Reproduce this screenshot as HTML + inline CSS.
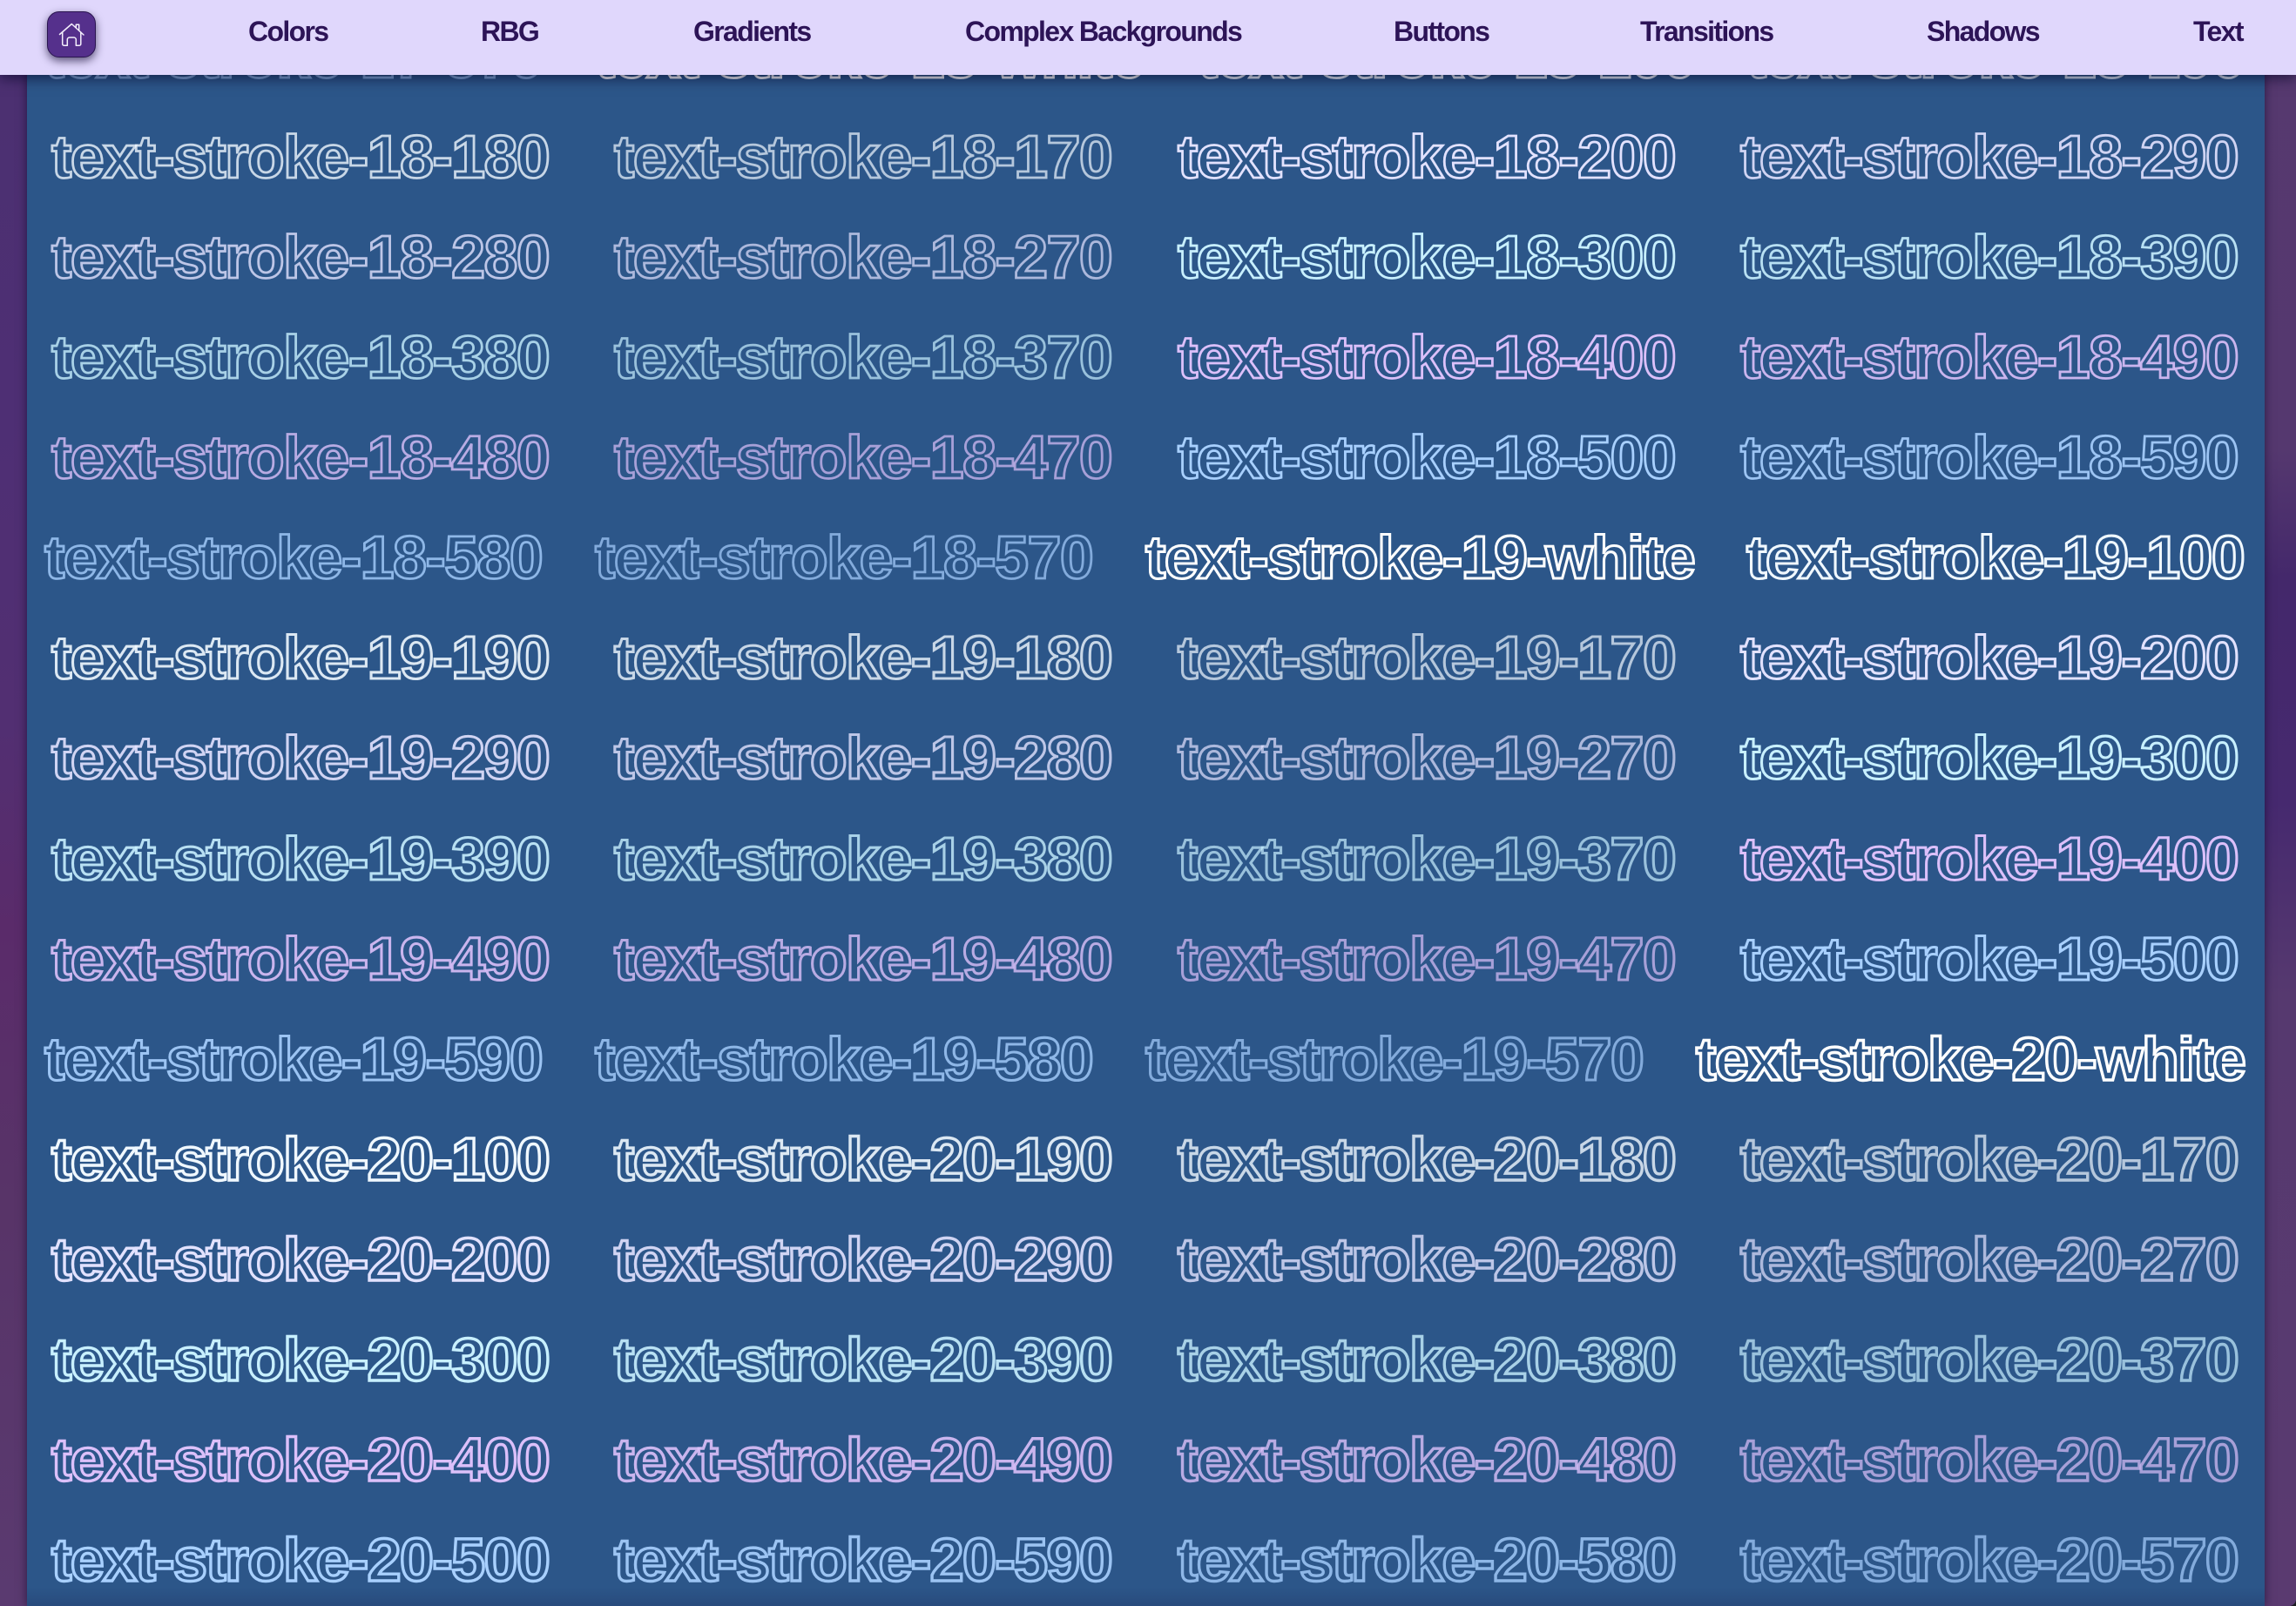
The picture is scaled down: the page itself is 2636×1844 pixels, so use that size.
<!DOCTYPE html>
<html lang="en"><head><meta charset="utf-8"><title>Text Stroke</title>
<style>
html,body{margin:0;padding:0;width:2636px;height:1844px;overflow:hidden;background:#1c1c22}
#win{position:absolute;left:0;top:0;width:2636px;height:1844px;overflow:hidden;border-radius:0 0 8px 0;
background:linear-gradient(180deg,#4b3070 0,#4e2f74 25%,#522f72 45%,#5a2b6a 58%,#583468 75%,#5a3a70 100%)}
#rs{position:absolute;left:2600px;top:0;width:36px;height:1844px;background:linear-gradient(180deg,#56396f 0,#55386f 28%,#44286b 36%,#46296f 50%,#56396f 62%,#5a3a70 100%)}
#panel{position:absolute;left:31px;top:0;width:2569px;height:1844px;background:#2c5689;box-shadow:0 0 10px rgba(10,5,35,.6)}
#bot{position:absolute;left:31px;top:1822px;width:2569px;height:22px;background:linear-gradient(180deg,rgba(25,35,80,0),rgba(25,35,80,.22))}
.r{position:absolute;left:0;width:2636px;height:80px}
.r span{position:absolute;top:0;white-space:nowrap;font:700 70px/80px "Liberation Sans",Arial,sans-serif;letter-spacing:-1.55px;color:transparent;-webkit-text-stroke-width:3px;-webkit-text-stroke-color:#fff}
.r .s18{-webkit-text-stroke-width:2.8px}.r .s19{-webkit-text-stroke-width:3.1px}.r .s20{-webkit-text-stroke-width:3.4px}
.r .w{-webkit-text-stroke-color:#fff}
.r .c100{-webkit-text-stroke-color:#f0f8ff}.r .c190{-webkit-text-stroke-color:rgba(240,248,255,.9)}.r .c180{-webkit-text-stroke-color:rgba(240,248,255,.8)}.r .c170{-webkit-text-stroke-color:rgba(240,248,255,.7)}
.r .c200{-webkit-text-stroke-color:#e2e2ff}.r .c290{-webkit-text-stroke-color:rgba(226,226,255,.9)}.r .c280{-webkit-text-stroke-color:rgba(226,226,255,.8)}.r .c270{-webkit-text-stroke-color:rgba(226,226,255,.7)}
.r .c300{-webkit-text-stroke-color:#c8f0ff}.r .c390{-webkit-text-stroke-color:rgba(200,240,255,.9)}.r .c380{-webkit-text-stroke-color:rgba(200,240,255,.8)}.r .c370{-webkit-text-stroke-color:rgba(200,240,255,.7)}
.r .c400{-webkit-text-stroke-color:#dcc0fa}.r .c490{-webkit-text-stroke-color:rgba(220,192,250,.9)}.r .c480{-webkit-text-stroke-color:rgba(220,192,250,.8)}.r .c470{-webkit-text-stroke-color:rgba(220,192,250,.7)}
.r .c500{-webkit-text-stroke-color:#a8d0ff}.r .c590{-webkit-text-stroke-color:rgba(168,208,255,.9)}.r .c580{-webkit-text-stroke-color:rgba(168,208,255,.8)}.r .c570{-webkit-text-stroke-color:rgba(168,208,255,.7)}
#nav{position:absolute;left:0;top:0;width:2636px;height:86px;background:#e0d7fc;box-shadow:0 4px 14px rgba(8,6,40,.65)}
#nav a{position:absolute;top:16px;font:700 32px/40px "Liberation Sans",Arial,sans-serif;letter-spacing:-1.65px;color:#2d1457;white-space:nowrap;text-decoration:none}
#home{position:absolute;left:54px;top:13px;width:56px;height:53px;box-sizing:border-box;border:1.5px solid #2a1550;border-radius:14px;background:#55308c;box-shadow:0 4px 10px rgba(20,10,50,.65)}
#home svg{position:absolute;left:-54px;top:-13px;width:130px;height:90px;margin:-1.5px 0 0 -1.5px}
</style></head><body>
<div id="win">
<div id="rs"></div>
<div id="panel"></div>

<div class="r" style="top:25px"><span class="s18 c570" style="left:51px">text-stroke-17-570</span><span class="s18 w" style="left:683px">text-stroke-18-white</span><span class="s18 c100" style="left:1375px">text-stroke-18-100</span><span class="s18 c190" style="left:2005px">text-stroke-18-190</span></div>
<div class="r" style="top:140px"><span class="s18 c180" style="left:59px">text-stroke-18-180</span><span class="s18 c170" style="left:705px">text-stroke-18-170</span><span class="s18 c200" style="left:1352px">text-stroke-18-200</span><span class="s18 c290" style="left:1998px">text-stroke-18-290</span></div>
<div class="r" style="top:255px"><span class="s18 c280" style="left:59px">text-stroke-18-280</span><span class="s18 c270" style="left:705px">text-stroke-18-270</span><span class="s18 c300" style="left:1352px">text-stroke-18-300</span><span class="s18 c390" style="left:1998px">text-stroke-18-390</span></div>
<div class="r" style="top:370px"><span class="s18 c380" style="left:59px">text-stroke-18-380</span><span class="s18 c370" style="left:705px">text-stroke-18-370</span><span class="s18 c400" style="left:1352px">text-stroke-18-400</span><span class="s18 c490" style="left:1998px">text-stroke-18-490</span></div>
<div class="r" style="top:485px"><span class="s18 c480" style="left:59px">text-stroke-18-480</span><span class="s18 c470" style="left:705px">text-stroke-18-470</span><span class="s18 c500" style="left:1352px">text-stroke-18-500</span><span class="s18 c590" style="left:1998px">text-stroke-18-590</span></div>
<div class="r" style="top:600px"><span class="s18 c580" style="left:51px">text-stroke-18-580</span><span class="s18 c570" style="left:683px">text-stroke-18-570</span><span class="s19 w" style="left:1315px">text-stroke-19-white</span><span class="s19 c100" style="left:2005px">text-stroke-19-100</span></div>
<div class="r" style="top:715px"><span class="s19 c190" style="left:59px">text-stroke-19-190</span><span class="s19 c180" style="left:705px">text-stroke-19-180</span><span class="s19 c170" style="left:1352px">text-stroke-19-170</span><span class="s19 c200" style="left:1998px">text-stroke-19-200</span></div>
<div class="r" style="top:830px"><span class="s19 c290" style="left:59px">text-stroke-19-290</span><span class="s19 c280" style="left:705px">text-stroke-19-280</span><span class="s19 c270" style="left:1352px">text-stroke-19-270</span><span class="s19 c300" style="left:1998px">text-stroke-19-300</span></div>
<div class="r" style="top:945.5px"><span class="s19 c390" style="left:59px">text-stroke-19-390</span><span class="s19 c380" style="left:705px">text-stroke-19-380</span><span class="s19 c370" style="left:1352px">text-stroke-19-370</span><span class="s19 c400" style="left:1998px">text-stroke-19-400</span></div>
<div class="r" style="top:1060.5px"><span class="s19 c490" style="left:59px">text-stroke-19-490</span><span class="s19 c480" style="left:705px">text-stroke-19-480</span><span class="s19 c470" style="left:1352px">text-stroke-19-470</span><span class="s19 c500" style="left:1998px">text-stroke-19-500</span></div>
<div class="r" style="top:1175.5px"><span class="s19 c590" style="left:51px">text-stroke-19-590</span><span class="s19 c580" style="left:683px">text-stroke-19-580</span><span class="s19 c570" style="left:1315px">text-stroke-19-570</span><span class="s20 w" style="left:1947px">text-stroke-20-white</span></div>
<div class="r" style="top:1290.5px"><span class="s20 c100" style="left:59px">text-stroke-20-100</span><span class="s20 c190" style="left:705px">text-stroke-20-190</span><span class="s20 c180" style="left:1352px">text-stroke-20-180</span><span class="s20 c170" style="left:1998px">text-stroke-20-170</span></div>
<div class="r" style="top:1405.5px"><span class="s20 c200" style="left:59px">text-stroke-20-200</span><span class="s20 c290" style="left:705px">text-stroke-20-290</span><span class="s20 c280" style="left:1352px">text-stroke-20-280</span><span class="s20 c270" style="left:1998px">text-stroke-20-270</span></div>
<div class="r" style="top:1520.5px"><span class="s20 c300" style="left:59px">text-stroke-20-300</span><span class="s20 c390" style="left:705px">text-stroke-20-390</span><span class="s20 c380" style="left:1352px">text-stroke-20-380</span><span class="s20 c370" style="left:1998px">text-stroke-20-370</span></div>
<div class="r" style="top:1635.5px"><span class="s20 c400" style="left:59px">text-stroke-20-400</span><span class="s20 c490" style="left:705px">text-stroke-20-490</span><span class="s20 c480" style="left:1352px">text-stroke-20-480</span><span class="s20 c470" style="left:1998px">text-stroke-20-470</span></div>
<div class="r" style="top:1750.5px"><span class="s20 c500" style="left:59px">text-stroke-20-500</span><span class="s20 c590" style="left:705px">text-stroke-20-590</span><span class="s20 c580" style="left:1352px">text-stroke-20-580</span><span class="s20 c570" style="left:1998px">text-stroke-20-570</span></div>

<div id="bot"></div>
<div id="nav">
<div id="home"><svg viewBox="0 0 130 90" fill="none" stroke="#f4effc" stroke-width="1.5" stroke-linecap="round" stroke-linejoin="round"><path d="M68.5 39.5 82.3 27.5 96 40"/><path d="M71.7 37V50.5a1.8 1.8 0 0 0 1.8 1.8H77.3V45.5a2.5 2.5 0 0 1 2.5-2.5h5a2.5 2.5 0 0 1 2.5 2.5V52.3H91a1.8 1.8 0 0 0 1.8-1.8V37"/><path d="M87.3 31.5V28.3H90.7V34.8"/></svg></div>
<a style="left:285px">Colors</a>
<a style="left:552px">RBG</a>
<a style="left:796px">Gradients</a>
<a style="left:1108px">Complex Backgrounds</a>
<a style="left:1600px">Buttons</a>
<a style="left:1883px">Transitions</a>
<a style="left:2212px">Shadows</a>
<a style="left:2518px">Text</a>
</div>
</div>
</body></html>
